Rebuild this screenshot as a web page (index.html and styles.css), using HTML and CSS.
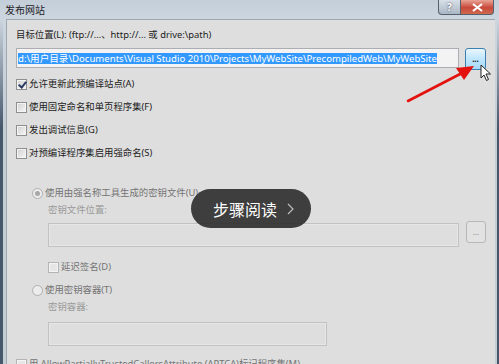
FILE: index.html
```html
<!DOCTYPE html>
<html lang="zh-CN">
  <head>
    <meta charset="UTF-8" />
    <title>发布网站</title>
    <link rel="stylesheet" href="styles.css">
  </head>
  <body>
    <div class="window">
      <div class="titlebar">
        <span class="title">发布网站</span>
        <div class="caption-btns">
          <span class="cap-btn help">?</span>
          <span class="cap-btn close">
            <svg width="11" height="9" viewBox="0 0 11 9"><path d="M1 1 L10 8 M10 1 L1 8" stroke="#fff" stroke-width="2.2"/></svg>
          </span>
        </div>
      </div>

      <div class="frame">
        <div class="frame-side left"></div>
        <div class="client">
          <div class="row label mt7">目标位置(L): (ftp://...、http://... 或 drive:\path)</div>

          <div class="field-row mt5">
            <div class="input path"><span class="sel">d:\用户目录\Documents\Visual Studio 2010\Projects\MyWebSite\PrecompiledWeb\MyWebSite</span></div>
            <span class="browse hot">...</span>
          </div>

          <div class="row mt6"><span class="check on"></span>允许更新此预编译站点(A)</div>
          <div class="row mt7"><span class="check"></span>使用固定命名和单页程序集(F)</div>
          <div class="row mt7"><span class="check"></span>发出调试信息(G)</div>
          <div class="row mt7"><span class="check"></span>对预编译程序集启用强命名(S)</div>

          <div class="group">
            <div class="row off mt24"><span class="radio dot"></span>使用由强名称工具生成的密钥文件(U)</div>
            <div class="sub">
              <div class="row dim mt1">密钥文件位置:</div>
              <div class="field-row mt3">
                <div class="input disabled keyfile"></div>
                <span class="browse dis">...</span>
              </div>
              <div class="row off mt12"><span class="check dis"></span>延迟签名(D)</div>
            </div>
            <div class="row off mt7"><span class="radio"></span>使用密钥容器(T)</div>
            <div class="sub">
              <div class="row dim mt1">密钥容器:</div>
              <div class="input disabled container mt7"></div>
            </div>
          </div>

          <div class="row off mt10"><span class="check dis"></span>用 AllowPartiallyTrustedCallersAttribute (APTCA)标记程序集(M)</div>
        </div>
        <div class="frame-side right"></div>
      </div>

      <!-- annotation over the dialog -->
      <svg class="arrow" width="90" height="50" viewBox="0 0 90 50">
        <path d="M4 45 L60 16" stroke="#e3120f" stroke-width="2.6" stroke-linecap="round"/>
        <polygon points="70,10 52,12 60,24" fill="#e3120f"/>
      </svg>
      <svg class="cursor" width="12" height="18" viewBox="0 0 12 18">
        <path d="M1 1 L1 14 L4 11 L6.5 16.5 L8.5 15.5 L6 10 L10.5 10 Z" fill="#fff" stroke="#222" stroke-width="1"/>
      </svg>

      <div class="pill">步骤阅读
        <svg width="7" height="12" viewBox="0 0 7 12"><path d="M1 1 L6 6 L1 11" fill="none" stroke="#bdbdbd" stroke-width="1.2"/></svg>
      </div>
    </div>
  </body>
</html>
```

FILE: styles.css
```css
* {
  box-sizing: border-box;
}

body {
  margin: 0;
  width: 499px;
  height: 364px;
  overflow: hidden;
  font-family: "Noto Sans", "Noto Sans CJK SC", sans-serif;
  font-size: 9.4px;
  color: #1c1c1c;
}

.window {
  position: relative;
  width: 499px;
  height: 364px;
  display: flex;
  flex-direction: column;
  background: #c9d3dd;
}

.titlebar {
  height: 19px;
  flex: none;
  display: flex;
  justify-content: space-between;
  background: linear-gradient(to bottom, #c3ced9, #cdd6df);
}

.title {
  padding: 3px 0 0 5px;
  font-size: 10px;
  line-height: 14px;
  color: #1e2228;
}

.caption-btns {
  display: flex;
  margin-right: 5px;
  height: 15px;
}

.cap-btn {
  display: flex;
  align-items: center;
  justify-content: center;
  height: 15px;
  border: 1px solid #55606c;
  border-top: none;
}

.help {
  width: 23px;
  border-radius: 0 0 0 4px;
  background: linear-gradient(to bottom, #d8e0e8, #aab7c4);
  color: #fff;
  font-weight: bold;
  font-size: 10px;
  text-shadow: 0 0 2px #334;
}

.close {
  width: 33px;
  border-left: none;
  border-radius: 0 0 4px 0;
  background: linear-gradient(to bottom, #e8a394, #c8483a 55%, #cf6a50);
}

.frame {
  flex: 1;
  display: flex;
  min-height: 0;
}

.frame-side {
  flex: none;
}

.frame-side.left {
  width: 6px;
  background:
    linear-gradient(to bottom, #cdd6df 0, rgba(205, 214, 223, 0) 110px),
    linear-gradient(to right, #46566b 0 3px, #c4ccd4 3px 6px);
}

.frame-side.right {
  width: 4px;
  background:
    linear-gradient(to bottom, #cdd6df 0, rgba(205, 214, 223, 0) 110px),
    linear-gradient(to right, #c4ccd4 0 2px, #46566b 2px 4px);
}

.client {
  flex: 1;
  background: #dedede;
  border-top: 1px solid #9ea8b3;
  border-left: 1px solid #9ea8b3;
  padding-left: 9px;
  overflow: hidden;
}

.row {
  display: flex;
  align-items: center;
  height: 16px;
  line-height: 16px;
  white-space: nowrap;
}

.row.off {
  color: #747474;
}

.row.dim {
  color: #9a9a9a;
}

.mt1 { margin-top: 1px; }
.mt3 { margin-top: 3px; }
.mt5 { margin-top: 5px; }
.mt6 { margin-top: 6px; }
.mt7 { margin-top: 7px; }
.mt10 { margin-top: 10px; }
.mt12 { margin-top: 12px; }
.mt24 { margin-top: 24px; }

.group {
  padding-left: 16px;
}

.sub {
  padding-left: 16px;
}

.check {
  flex: none;
  width: 11px;
  height: 11px;
  margin-right: 2px;
  border: 1px solid #8e8f8f;
  background: linear-gradient(135deg, #d0d0d0, #f8f8f8);
  box-shadow: inset 0 0 0 1px #f4f4f4;
  position: relative;
}

.check.on::after {
  content: "";
  position: absolute;
  left: 3px;
  top: 0;
  width: 3px;
  height: 6px;
  border: solid #2a3a64;
  border-width: 0 2px 2px 0;
  transform: rotate(40deg);
}

.check.dis {
  border-color: #b4b4b4;
  background: #e6e6e6;
}

.radio {
  flex: none;
  width: 11px;
  height: 11px;
  margin-right: 2px;
  border: 1px solid #b0b0b0;
  border-radius: 50%;
  background: #ececec;
  position: relative;
}

.radio.dot::after {
  content: "";
  position: absolute;
  left: 2px;
  top: 2px;
  width: 5px;
  height: 5px;
  border-radius: 50%;
  background: #a8a8a8;
}

.field-row {
  display: flex;
  align-items: flex-start;
}

.input {
  flex: none;
  height: 20px;
  border: 1px solid #abadb3;
  background: #f3f3f3;
  display: flex;
  align-items: center;
  overflow: hidden;
}

.input.path {
  width: 443px;
  padding-left: 1px;
}

.sel {
  background: #3399ff;
  color: #fff;
  font-size: 9.6px;
  line-height: 11px;
  white-space: nowrap;
}

.input.disabled {
  height: 24px;
  background: #dedede;
  border: 1px solid #c2c2c2;
  box-shadow: inset 0 0 0 1px #e6e6e6;
}

.input.keyfile {
  width: 411px;
  margin-top: 2px;
}

.input.container {
  width: 279px;
}

.browse {
  flex: none;
  display: flex;
  align-items: center;
  justify-content: center;
  height: 22px;
  font-size: 8px;
  font-weight: bold;
  line-height: 8px;
  border-radius: 3px;
}

.browse.hot {
  width: 21px;
  margin-left: 6px;
  border: 1px solid #3c7fb1;
  background: linear-gradient(to bottom, #eaf6fd, #bee6fd 50%, #a7d9f5);
  color: #111;
}

.browse.dis {
  width: 20px;
  margin-left: 7px;
  border: 1px solid #b8b8b8;
  background: #e2e2e2;
  color: #8a8a8a;
  font-weight: normal;
}

.arrow {
  position: absolute;
  left: 404px;
  top: 56px;
}

.cursor {
  position: absolute;
  left: 480px;
  top: 64px;
}

.pill {
  position: absolute;
  left: 191px;
  top: 189px;
  width: 120px;
  height: 39px;
  border-radius: 20px;
  background: rgba(44, 44, 44, 0.9);
  color: #fff;
  font-family: "Noto Sans CJK SC", sans-serif;
  font-size: 16px;
  display: flex;
  align-items: center;
  padding-left: 22px;
  gap: 10px;
}
```
